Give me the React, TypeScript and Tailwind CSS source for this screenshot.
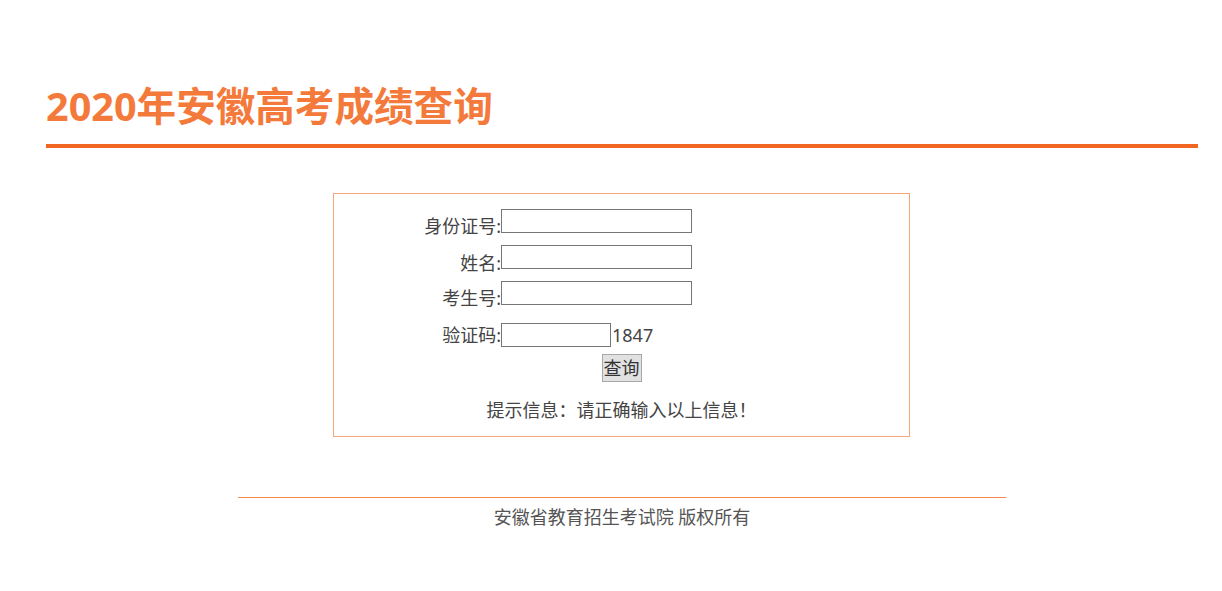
import React from "react";

const FONT = { fontFamily: '"Noto Sans", "Noto Sans CJK SC", sans-serif' };

function Row({
  label,
  mt,
  labelMt,
  children,
}: {
  label: string;
  mt: string;
  labelMt: string;
  children: React.ReactNode;
}) {
  return (
    <div className={`flex h-[24px] items-start overflow-visible ${mt}`}>
      <div className={`w-[167px] shrink-0 text-right text-[18px] leading-[24px] text-[#444] ${labelMt}`}>
        {label}
      </div>
      {children}
    </div>
  );
}

export default function App() {
  return (
    <div className="min-h-[591px] w-[1222px] bg-white" style={FONT}>
      <div className="ml-[46px] w-[1152px] pt-[86px]">
        <h1 className="text-[39.6px] font-bold leading-[40px] text-[#f47a3c]">2020年安徽高考成绩查询</h1>
        <div className="mt-[18px] h-[4px] w-[1152px] bg-[#f26522]" />

        <div className="ml-[287px] mt-[45px] box-border h-[244px] w-[577px] border border-[#f8a578] pt-[15px]">
          <Row label="身份证号:" mt="mt-0" labelMt="mt-[5px]">
            <input className="box-border h-[24px] w-[191px] border border-[#767676] bg-white outline-none" />
          </Row>
          <Row label="姓名:" mt="mt-[12px]" labelMt="mt-[6px]">
            <input className="box-border h-[24px] w-[191px] border border-[#767676] bg-white outline-none" />
          </Row>
          <Row label="考生号:" mt="mt-[12px]" labelMt="mt-[5px]">
            <input className="box-border h-[24px] w-[191px] border border-[#767676] bg-white outline-none" />
          </Row>
          <Row label="验证码:" mt="mt-[18px]" labelMt="mt-0">
            <input className="box-border h-[24px] w-[110px] border border-[#767676] bg-white outline-none" />
            <span className="ml-[1px] text-[18px] leading-[24px] text-[#444]">1847</span>
          </Row>
          <div className="mt-[7px] flex justify-center">
            <button className="box-border h-[28px] w-[40px] border border-[#a8a8a8] bg-[#e1e1e1] p-0 text-[18px] leading-[24px] text-[#333]">
              查询
            </button>
          </div>
          <div className="mt-[16px] text-center text-[18px] leading-[24px] text-[#444]">
            提示信息：请正确输入以上信息！
          </div>
        </div>

        <div className="ml-[192px] mt-[60px] w-[768px]">
          <div className="h-[1px] w-[768px] bg-[#f5874a]" />
          <div className="mt-[7px] text-center text-[18px] leading-[24px] text-[#555]">
            安徽省教育招生考试院 版权所有
          </div>
        </div>
      </div>
    </div>
  );
}
